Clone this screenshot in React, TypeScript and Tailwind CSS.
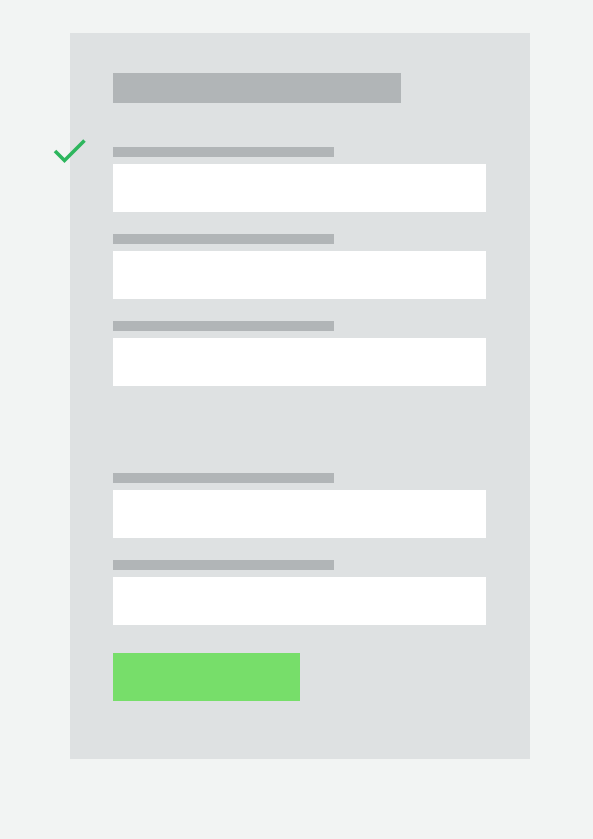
function Field() {
    return (
        <div className="flex flex-col gap-[7px]">
            <div className="h-[10px] w-[221px] bg-[#b1b5b7]" />
            <div className="h-12 w-full bg-white" />
        </div>
    );
}

export default function App() {
    return (
        <main className="min-h-screen bg-[#f2f4f3] pt-[33px]">
            <div className="relative ml-[70px] w-[460px] bg-[#dee1e2] pb-[58px] pl-[43px] pr-[44px] pt-10">
                {/* validated mark beside the first field */}
                <svg
                    className="absolute left-[-18px] top-[105px]"
                    width="36"
                    height="30"
                    viewBox="0 0 36 30"
                    fill="none"
                >
                    <path
                        d="M3 13 L12.5 22.5 L32.5 2.5"
                        stroke="#2db65d"
                        strokeWidth="3.6"
                        strokeLinejoin="miter"
                    />
                </svg>

                <div className="h-[30px] w-[288px] bg-[#b1b5b7]" />

                <div className="mt-11 flex flex-col gap-[22px]">
                    <Field />
                    <Field />
                    <Field />
                </div>

                <div className="mt-[87px] flex flex-col gap-[22px]">
                    <Field />
                    <Field />
                </div>

                <div className="mt-7 h-12 w-[187px] bg-[#77de6a]" />
            </div>
        </main>
    );
}
